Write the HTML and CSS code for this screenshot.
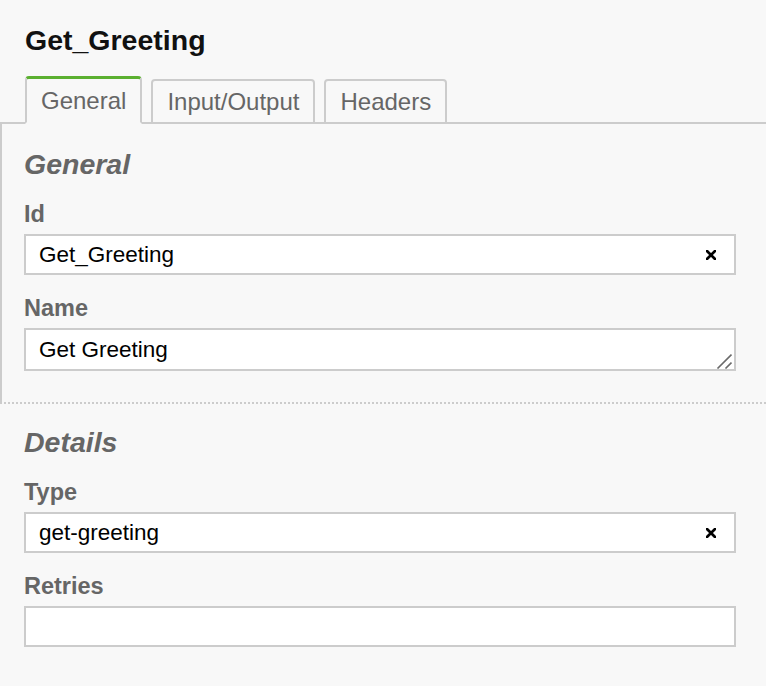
FILE: index.html
```html
<!DOCTYPE html>
<html>
<head>
<meta charset="utf-8">
<link rel="stylesheet" href="styles.css">
</head>
<body>
<div class="panel">
  <h1 class="title">Get_Greeting</h1>
  <div class="tabs">
    <div class="tab active">General</div>
    <div class="tab">Input/Output</div>
    <div class="tab">Headers</div>
  </div>
  <div class="group group-general">
    <div class="group-label">General</div>
    <div class="field">
      <label class="field-label">Id</label>
      <div class="input-wrap">
        <input class="text-input" type="text" value="Get_Greeting">
        <span class="clear"><svg width="10" height="10" viewBox="0 0 10 10"><path d="M1 1L9 9M9 1L1 9" stroke="#000" stroke-width="2.7" stroke-linecap="square" fill="none"/></svg></span>
      </div>
    </div>
    <div class="field">
      <label class="field-label">Name</label>
      <div class="input-wrap">
        <textarea class="text-area" rows="1">Get Greeting</textarea>
        <span class="grip"><svg width="16" height="16" viewBox="0 0 16 16"><path d="M1.5 15.5L15.5 1.5M9.5 15.5L15.5 9.5" stroke="#6a6a6a" stroke-width="1.6" fill="none"/></svg></span>
      </div>
    </div>
  </div>
  <div class="group group-details">
    <div class="group-label">Details</div>
    <div class="field">
      <label class="field-label">Type</label>
      <div class="input-wrap">
        <input class="text-input" type="text" value="get-greeting">
        <span class="clear"><svg width="10" height="10" viewBox="0 0 10 10"><path d="M1 1L9 9M9 1L1 9" stroke="#000" stroke-width="2.7" stroke-linecap="square" fill="none"/></svg></span>
      </div>
    </div>
    <div class="field">
      <label class="field-label">Retries</label>
      <div class="input-wrap">
        <input class="text-input" type="text" value="">
      </div>
    </div>
  </div>
</div>
</body>
</html>
```

FILE: styles.css
```css
html, body {
  margin: 0;
  padding: 0;
  background: #f8f8f8;
}

body {
  font-family: "Liberation Sans", Arial, Helvetica, sans-serif;
  width: 766px;
  height: 686px;
  overflow: hidden;
}

.title {
  margin: 23px 0 0 25px;
  font-size: 28.5px;
  line-height: 34px;
  font-weight: bold;
  color: #111;
}

.tabs {
  display: flex;
  align-items: flex-end;
  gap: 9px;
  margin-top: 19px;
  padding-left: 25px;
  border-bottom: 2px solid #ccc;
}

.tab {
  margin-bottom: -2px;
  padding: 0 14px;
  height: 41px;
  line-height: 41px;
  font-size: 24px;
  color: #666;
  background: #f8f8f8;
  border: 2px solid #ccc;
  border-radius: 4px 4px 0 0;
}

.tab.active {
  height: 43px;
  line-height: 43px;
  border-top: 3px solid #5bb030;
  border-bottom: 2px solid #f8f8f8;
  padding: 0 14px;
}

.group {
  padding: 0 30px 0 24px;
}

.group-general {
  border-left: 2px solid #ccc;
  border-bottom: 2px dotted #ccc;
  padding: 23px 30px 31px 22px;
}

.group-details {
  padding-top: 21px;
}

.group-label {
  font-size: 28.5px;
  line-height: 34px;
  font-weight: bold;
  font-style: italic;
  color: #666;
  margin-bottom: 19px;
}

.field {
  display: flex;
  flex-direction: column;
  gap: 6px;
  margin-bottom: 19px;
}

.field:last-child {
  margin-bottom: 0;
}

.field-label {
  font-size: 23.5px;
  line-height: 28px;
  font-weight: bold;
  color: #666;
}

.input-wrap {
  position: relative;
  display: flex;
}

.text-input,
.text-area {
  box-sizing: border-box;
  width: 100%;
  margin: 0;
  border: 2px solid #ccc;
  background: #fff;
  font-family: "Liberation Sans", Arial, Helvetica, sans-serif;
  font-size: 22.5px;
  color: #000;
  outline: none;
  border-radius: 0;
}

.text-input {
  height: 41px;
  padding: 0 40px 0 13px;
}

.text-area {
  display: block;
  height: 43px;
  padding: 7px 13px;
  line-height: 25px;
  resize: none;
  overflow: hidden;
}

.clear {
  position: absolute;
  right: 20px;
  top: 16px;
  width: 10px;
  height: 10px;
  display: flex;
}

.grip {
  position: absolute;
  right: 4px;
  bottom: 2px;
  width: 16px;
  height: 16px;
  display: flex;
}
```
